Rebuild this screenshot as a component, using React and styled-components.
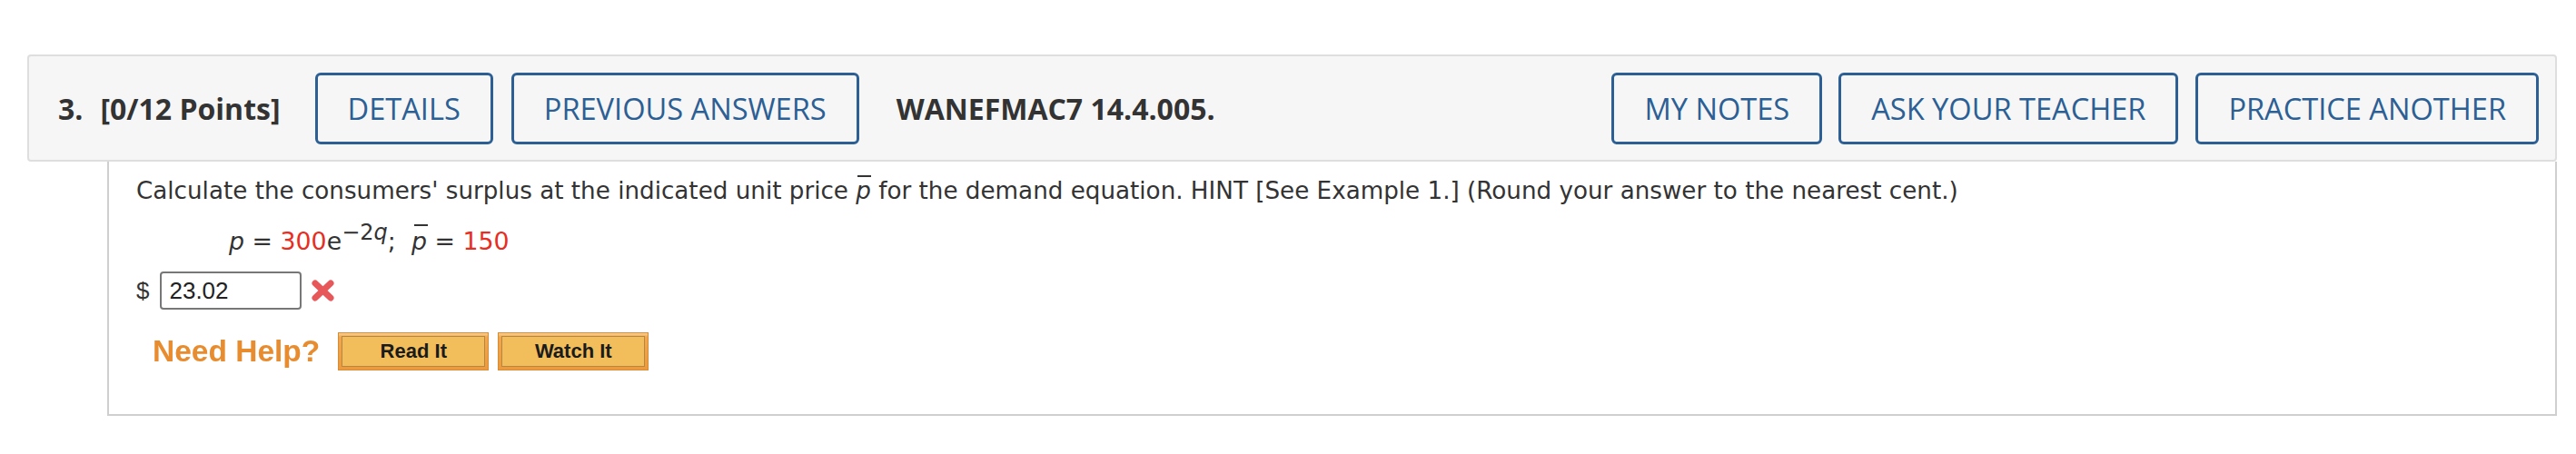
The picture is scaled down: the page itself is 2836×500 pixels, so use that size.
import React from 'react';
import styled, { createGlobalStyle } from 'styled-components';

const GlobalStyle = createGlobalStyle`
	body {
		margin: 0;
		background: #fff;
		font-family: "Open Sans", sans-serif;
	}
`

const Page = styled.div`
	width: 2836px;
	box-sizing: border-box;
	padding: 60px 21px 0 30px;
`

const Header = styled.div`
	display: flex;
	align-items: center;
	height: 118px;
	box-sizing: border-box;
	padding: 0 18px 0 32px;
	background: #f6f6f6;
	border: 2px solid #dedede;
	border-radius: 4px;
	font-family: "Open Sans", sans-serif;
	font-weight: 700;
	font-size: 32px;
	color: #333;
`

const Number = styled.span`
	margin-right: 19px;
`

const Points = styled.span`
	margin-right: 38px;
`

const Code = styled.span`
	margin: 0 20px 0 41px;
	flex: 1;
`

const HeadButton = styled.button`
	height: 79px;
	box-sizing: border-box;
	padding: 0 ${p => p.$pad || 33}px;
	margin-left: ${p => p.$gap || 0}px;
	background: transparent;
	border: 3.5px solid #2c5f94;
	border-radius: 6px;
	font-family: "Open Sans", sans-serif;
	font-size: 32.6px;
	font-weight: 400;
	color: #2c5f94;
	white-space: nowrap;
	cursor: pointer;
`

const Body = styled.div`
	margin-left: 88px;
	height: 280px;
	box-sizing: border-box;
	padding: 14px 30px 0;
	border: 2px solid #cfcfcf;
	border-top: none;
	font-family: "DejaVu Sans", Verdana, sans-serif;
	color: #333;
`

const Question = styled.div`
	font-size: 26.2px;
	line-height: 36px;
	white-space: nowrap;
`

const PBar = styled.i`
	position: relative;
	font-style: italic;

	&::before {
		content: '';
		position: absolute;
		left: ${p => p.$left || 2}px;
		top: ${p => p.$top || -1}px;
		width: ${p => p.$w || 15}px;
		height: 2px;
		background: #333;
	}
`

const Equation = styled.div`
	margin: 18px 0 0 102px;
	font-size: 26.8px;
	line-height: 40px;
	white-space: nowrap;
`

const Red = styled.span`
	color: #e62e22;
`

const Sup = styled.sup`
	font-size: 24px;
	line-height: 0;
	vertical-align: 11px;
`

const AnswerRow = styled.div`
	display: flex;
	align-items: center;
	margin-top: 13px;
	font-family: "Liberation Sans", Arial, sans-serif;
`

const Dollar = styled.span`
	font-size: 26px;
	margin-right: 12px;
`

const AnswerBox = styled.div`
	width: 156px;
	height: 42px;
	box-sizing: border-box;
	padding: 0 8px;
	border: 2px solid #777;
	border-radius: 4px;
	font-size: 26px;
	line-height: 38px;
	color: #222;
`

const Wrong = styled.svg`
	margin-left: 10px;
	width: 27px;
	height: 26px;
`

const HelpRow = styled.div`
	display: flex;
	align-items: center;
	margin: 25px 0 0 18px;
	font-family: "Liberation Sans", Arial, sans-serif;
`

const HelpLabel = styled.span`
	font-size: 33.5px;
	font-weight: 700;
	color: #e88c30;
	margin-right: 20px;
	filter: blur(0.4px);
`

const HelpButton = styled.button`
	width: 166px;
	height: 42px;
	box-sizing: border-box;
	padding: 3px;
	margin-right: 10px;
	background: linear-gradient(#f6d39c 0, #f0a850 4px, #eb9a3e 100%);
	border: 1px solid #d98a34;
	cursor: pointer;

	span {
		display: flex;
		align-items: center;
		justify-content: center;
		height: 100%;
		box-sizing: border-box;
		border: 1.5px solid #b9843d;
		background: #f2be5b;
		font-family: "Liberation Sans", Arial, sans-serif;
		font-size: 22px;
		font-weight: 700;
		color: #1b1b1b;
	}
`

const App = () => {
	return (
		<>
			<GlobalStyle />
			<Page>
				<Header>
					<Number>3.</Number>
					<Points>[0/12 Points]</Points>
					<HeadButton>DETAILS</HeadButton>
					<HeadButton $gap={20}>PREVIOUS ANSWERS</HeadButton>
					<Code>WANEFMAC7 14.4.005.</Code>
					<HeadButton>MY NOTES</HeadButton>
					<HeadButton $gap={18}>ASK YOUR TEACHER</HeadButton>
					<HeadButton $gap={19}>PRACTICE ANOTHER</HeadButton>
				</Header>
				<Body>
					<Question>
						Calculate the consumers' surplus at the indicated unit price <PBar $top={-2}>p</PBar> for the demand equation. HINT [See Example 1.] (Round your answer to the nearest cent.)
					</Question>
					<Equation>
						<i>p</i> = <Red>300</Red>e<Sup>−2<i>q</i></Sup>;&nbsp; <PBar $top={-3} $left={3}>p</PBar> = <Red>150</Red>
					</Equation>
					<AnswerRow>
						<Dollar>$</Dollar>
						<AnswerBox>23.02</AnswerBox>
						<Wrong viewBox="0 0 27 26">
							<g stroke="#e6585a" strokeWidth="7" strokeLinecap="round">
								<line x1="5" y1="5" x2="22" y2="21" />
								<line x1="22" y1="5" x2="5" y2="21" />
							</g>
						</Wrong>
					</AnswerRow>
					<HelpRow>
						<HelpLabel>Need Help?</HelpLabel>
						<HelpButton><span>Read It</span></HelpButton>
						<HelpButton><span>Watch It</span></HelpButton>
					</HelpRow>
				</Body>
			</Page>
		</>
	);
}

export default App;
